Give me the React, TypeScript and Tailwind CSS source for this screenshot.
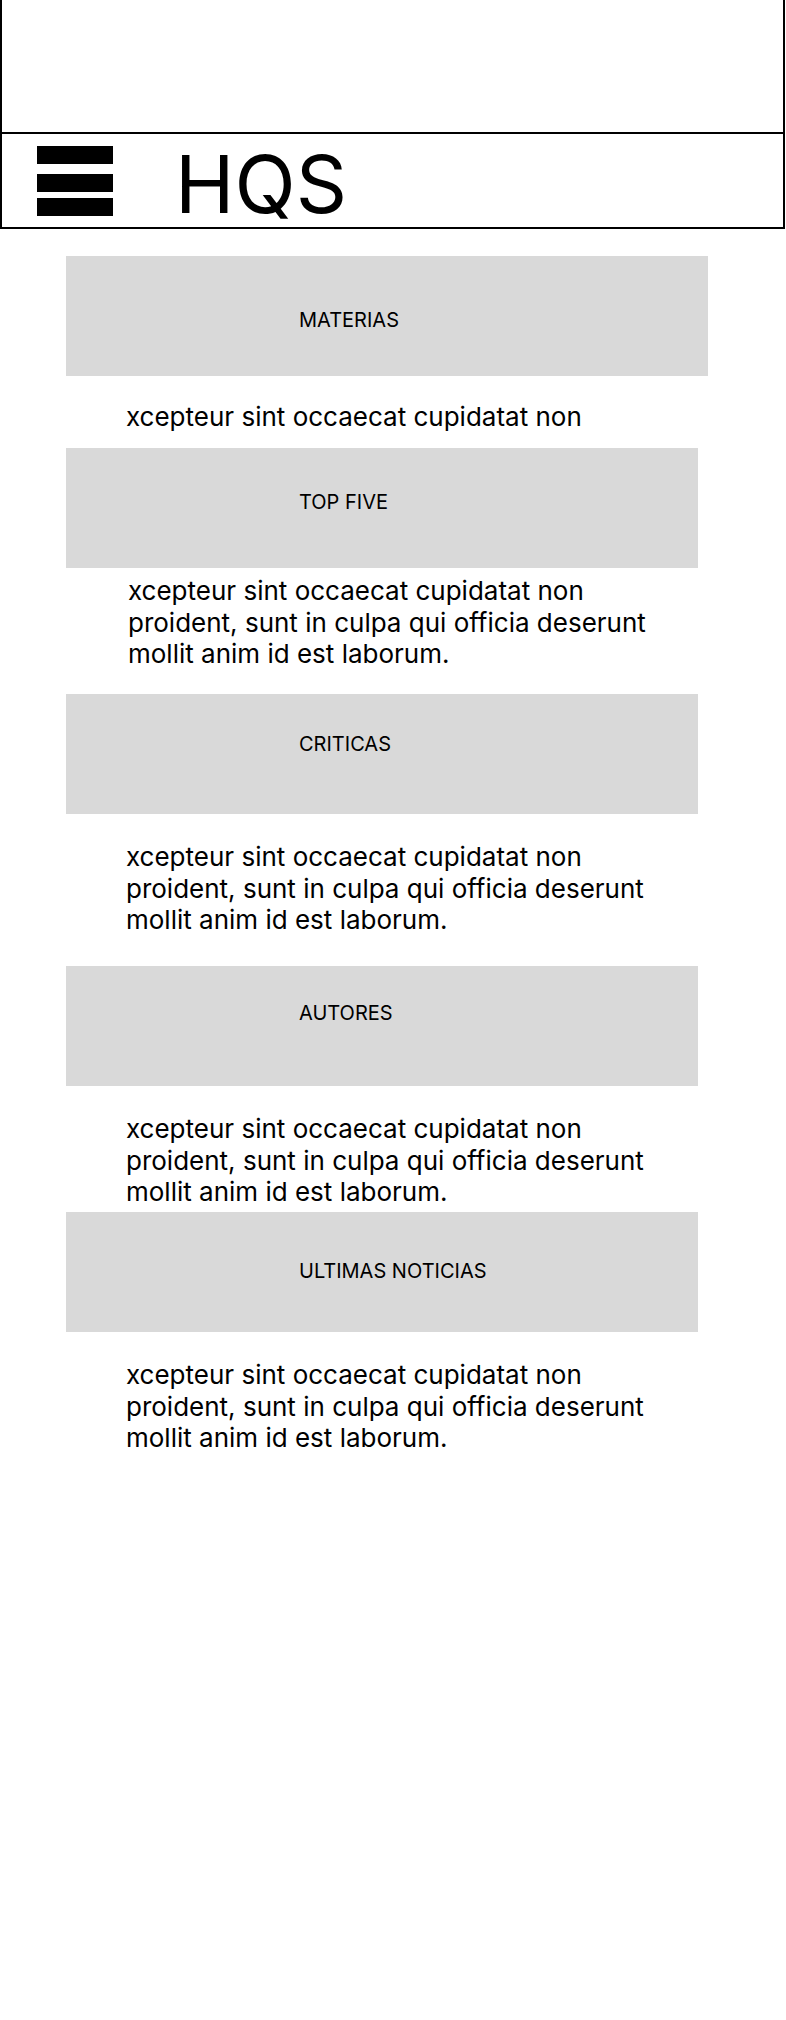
import React from "react";

type Section = {
  label: string;
  boxClass: string;
  labelClass: string;
  text: string;
  textClass: string;
};

const LONG =
  "xcepteur sint occaecat cupidatat non proident, sunt in culpa qui officia deserunt mollit anim id est laborum.";

const sections: Section[] = [
  {
    label: "MATERIAS",
    boxClass: "mt-[27px] w-[642px]",
    labelClass: "pt-[52px]",
    text: "xcepteur sint occaecat cupidatat non",
    textClass: "mt-[25px] mb-[15.5px] pl-[60px]",
  },
  {
    label: "TOP FIVE",
    boxClass: "w-[632px]",
    labelClass: "pt-[42px]",
    text: LONG,
    textClass: "mt-[7px] mb-[24.5px] pl-[62px]",
  },
  {
    label: "CRITICAS",
    boxClass: "w-[632px]",
    labelClass: "pt-[38px]",
    text: LONG,
    textClass: "mt-[27px] mb-[30.5px] pl-[60px]",
  },
  {
    label: "AUTORES",
    boxClass: "w-[632px]",
    labelClass: "pt-[35px]",
    text: LONG,
    textClass: "mt-[27px] mb-[4.5px] pl-[60px]",
  },
  {
    label: "ULTIMAS NOTICIAS",
    boxClass: "w-[632px]",
    labelClass: "pt-[47px]",
    text: LONG,
    textClass: "mt-[27px] pl-[60px]",
  },
];

function Hamburger() {
  return (
    <div className="flex w-[76px] flex-col">
      <div className="h-[18px] w-full bg-black" />
      <div className="mt-[10px] h-[18px] w-full bg-black" />
      <div className="mt-[6px] h-[18px] w-full bg-black" />
    </div>
  );
}

export default function App() {
  return (
    <div className="min-h-[2020px] w-[786px] bg-white font-['Inter','Noto_Sans',sans-serif] text-black">
      <header className="h-[229px] w-[785px] border-x-2 border-b-2 border-black">
        <div className="h-[134px] w-full border-b-2 border-black" />
        <div className="flex h-[93px] items-start">
          <div className="ml-[35px] mt-[12px]">
            <Hamburger />
          </div>
          <h1 className="ml-[62px] mt-[10px] text-[80px] font-normal leading-[80px]">HQS</h1>
        </div>
      </header>

      <main className="pl-[66px]">
        {sections.map((s) => (
          <section key={s.label}>
            <div className={`h-[120px] bg-[#d9d9d9] ${s.boxClass}`}>
              <div className={`pl-[233px] text-[20px] leading-[24px] ${s.labelClass}`}>{s.label}</div>
            </div>
            <p className={`w-[640px] text-[26px] leading-[31.5px] ${s.textClass}`}>
              <span className="inline-block w-[548px]">{s.text}</span>
            </p>
          </section>
        ))}
      </main>
    </div>
  );
}
